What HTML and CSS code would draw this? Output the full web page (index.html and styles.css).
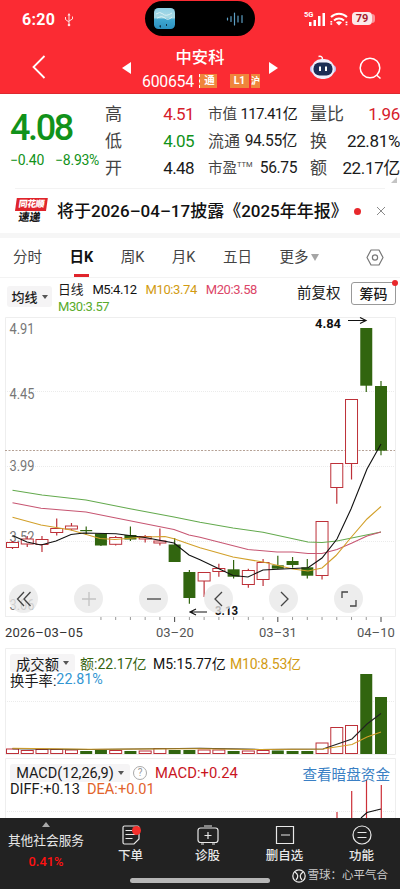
FILE: index.html
```html
<!DOCTYPE html>
<html lang="zh-CN">

<head>
    <meta charset="UTF-8" />
    <meta name="viewport" content="width=device-width, initial-scale=1.0" />
    <title>中安科 600654</title>
    <link rel="stylesheet" href="styles.css">
</head>

<body>
    <div class="app">
        <!-- Header -->
        <header class="header">
            <div class="status">
                <span class="clock">6:20</span>
                <svg class="usb" width="10" height="14" viewBox="0 0 10 14" fill="none" stroke="#ffe0e0" stroke-width="1">
                    <path d="M5 1v10M1.5 4v2.5L5 9M8.5 3.5v2.500L5 8" />
                    <path d="M5 0l1.500 2.500h-3z" fill="#ffe0e0" stroke="none" />
                    <circle cx="5" cy="12" r="1.300" fill="#ffe0e0" stroke="none" />
                </svg>
                <div class="island">
                    <svg width="21" height="21" viewBox="0 0 21 21">
                        <defs>
                            <linearGradient id="sky" x1="0" y1="0" x2="0" y2="1">
                                <stop offset="0" stop-color="#8fd0e6" />
                                <stop offset=".45" stop-color="#a9d9e4" />
                                <stop offset=".55" stop-color="#3fa6cf" />
                                <stop offset="1" stop-color="#2b91c0" />
                            </linearGradient>
                        </defs>
                        <rect width="21" height="21" rx="4.500" fill="url(#sky)" />
                        <path d="M2 6q4-3 7 0t9-1M3 10q5-3 8 0t7-1" stroke="#d8f0f4" fill="none" />
                        <path d="M5 18l2-1v3zM12 16h1v2h-1z" fill="#134" />
                    </svg>
                    <svg width="18" height="14" viewBox="0 0 18 14" stroke="#5d9fc4" stroke-width="1.200" stroke-linecap="round">
                        <path d="M1.500 6v2M5 4.500v5M8.500 1v12M12 4v6M16 3.500v7" />
                    </svg>
                </div>
                <div class="signals">
                    <span class="net">5G</span>
                    <svg class="bars" width="17" height="14" viewBox="0 0 17 14" fill="#fff">
                        <path d="M0 10h2.500v4H0zM4.500 8H7v6H4.500zM9 4h2.500v10H9zM13.500 1H16v13h-2.500z" />
                    </svg>
                    <svg width="18" height="14" viewBox="0 0 18 14" fill="none" stroke="#fff" stroke-width="2">
                        <path d="M1 5a11.500 11.500 0 0 1 16 0M4 8.500a7.500 7.500 0 0 1 10 0" />
                        <path d="M9 13.500l-3-3a4.500 4.500 0 0 1 6 0z" fill="#fff" stroke="none" />
                        <path d="M1.300 9v4M16.500 9.500v4" stroke-width="1.800" stroke-dasharray="1.500 .8" />
                    </svg>
                    <span class="battery">79</span>
                    <i class="battery-cap"></i>
                </div>
            </div>
            <div class="nav">
                <svg class="back" width="14" height="24" viewBox="0 0 14 24" fill="none" stroke="#fff" stroke-width="1.800">
                    <path d="M12.500 1L1.500 12l11 11" />
                </svg>
                <svg class="prev" width="10" height="12" viewBox="0 0 10 12" fill="#fff"><path d="M0 6l9-6v12z" /></svg>
                <div class="stock">
                    <div class="stock-name">中安科</div>
                    <div class="stock-code">
                        <span>600654</span>
                        <i class="tag tag-pass">通</i>
                        <i class="tag tag-l1">L1</i>
                        <i class="tag tag-end">沪</i>
                    </div>
                </div>
                <svg class="next" width="10" height="12" viewBox="0 0 10 12" fill="#fff"><path d="M9 6L0 0v12z" /></svg>
                <svg class="robot" width="26" height="25" viewBox="0 0 26 25">
                    <path d="M8.500 1.500q4-1 4 3" fill="none" stroke="#fff" stroke-width="1.500" />
                    <rect x="0" y="10" width="26" height="8" rx="4" fill="#c5c0f0" />
                    <rect x="1.500" y="4" width="23" height="20" rx="10" fill="#eeeefb" />
                    <rect x="3.500" y="7.500" width="19" height="13" rx="6" fill="#1c2d55" />
                    <path d="M10 11.500v4.500M16 11.500v4.500" stroke="#fff" stroke-width="2" />
                </svg>
                <svg class="search" width="23" height="23" viewBox="0 0 23 23" fill="none" stroke="#fff" stroke-width="1.500">
                    <circle cx="11" cy="11" r="9.800" />
                    <path d="M17.500 18l4 3.500" />
                </svg>
            </div>
        </header>

        <!-- Quote -->
        <section class="quote">
            <div class="last">
                <div class="price">4.08</div>
                <div class="change"><span>−0.40</span><span>−8.93%</span></div>
            </div>
            <dl class="col col-range">
                <div><dt>高</dt><dd class="up">4.51</dd></div>
                <div><dt>低</dt><dd class="down">4.05</dd></div>
                <div><dt>开</dt><dd>4.48</dd></div>
            </dl>
            <dl class="col col-cap">
                <div><dt>市值</dt><dd class="tight">117.41亿</dd></div>
                <div><dt class="wide">流通</dt><dd>94.55亿</dd></div>
                <div><dt>市盈<sup>TTM</sup></dt><dd>56.75</dd></div>
            </dl>
            <dl class="col col-vol">
                <div><dt>量比</dt><dd class="up">1.96</dd></div>
                <div><dt>换</dt><dd>22.81%</dd></div>
                <div><dt>额</dt><dd>22.17亿</dd></div>
            </dl>
            <i class="corner"></i>
        </section>

        <!-- Notice -->
        <section class="notice">
            <div class="logo"><span>同花顺</span><em>速递</em></div>
            <p>将于2026–04–17披露《2025年年报》</p>
            <i class="dot"></i>
            <svg width="10" height="10" viewBox="0 0 10 10" stroke="#8a8a8a"><path d="M1 1l8 8M9 1L1 9" /></svg>
        </section>

        <!-- Period tabs -->
        <nav class="tabs">
            <span>分时</span>
            <span class="active">日K</span>
            <span>周K</span>
            <span>月K</span>
            <span>五日</span>
            <span class="more">更多<i></i></span>
            <svg width="18" height="17" viewBox="0 0 18 17" fill="none" stroke="#777" stroke-width="1.200">
                <path d="M5 1h8l4 7.500-4 7.500H5L1 8.500z" stroke-linejoin="round" />
                <circle cx="9" cy="8.500" r="2.600" />
            </svg>
        </nav>

        <!-- Moving averages -->
        <section class="legend">
            <span class="picker">均线<i></i></span>
            <div class="averages">
                <span class="day">日线</span>
                <span class="m5">M5:4.12</span>
                <span class="m10">M10:3.74</span>
                <span class="m20">M20:3.58</span>
                <span class="m30">M30:3.57</span>
            </div>
            <span class="adjust">前复权</span>
            <span class="chips">筹码<i></i></span>
        </section>

        <!-- Candles -->
        <section class="kline">
            <svg id="kline" width="400" height="306" viewBox="0 316 400 306"></svg>
            <div class="controls">
                <button><svg width="18" height="18" viewBox="0 0 18 18"><path d="M9 2L2.500 9 9 16M15.500 2L9 9l6.500 7" /></svg></button>
                <button class="off"><svg width="18" height="18" viewBox="0 0 18 18"><path d="M9 2v14M2 9h14" /></svg></button>
                <button><svg width="18" height="18" viewBox="0 0 18 18"><path d="M2 9h14" /></svg></button>
                <button><svg width="18" height="18" viewBox="0 0 18 18"><path d="M12 2L5 9l7 7" /></svg></button>
                <button><svg width="18" height="18" viewBox="0 0 18 18"><path d="M6 2l7 7-7 7" /></svg></button>
                <button><svg width="18" height="18" viewBox="0 0 18 18"><path d="M2 8V2h6M16 10v6h-6" /></svg></button>
            </div>
        </section>
        <div class="dates">
            <span>2026–03–05</span><span>03–20</span><span>03–31</span><span>04–10</span>
        </div>

        <!-- Turnover -->
        <section class="panel volume">
            <svg id="volume" width="400" height="110" viewBox="0 648 400 110"></svg>
            <div class="panel-text">
                <div><span class="picker">成交额<i></i></span><span class="amount">额:22.17亿</span><span class="v5">M5:15.77亿</span><span class="v10">M10:8.53亿</span></div>
                <div class="rate">换手率:<b>22.81%</b></div>
            </div>
        </section>

        <!-- MACD -->
        <section class="panel macd">
            <svg id="macd" width="400" height="60" viewBox="0 758 400 60"></svg>
            <div class="panel-text">
                <div><span class="picker">MACD(12,26,9)<i></i></span><span class="help">?</span><span class="macd-value">MACD:+0.24</span><a>查看暗盘资金</a></div>
                <div class="diff">DIFF:+0.13 <b>DEA:+0.01</b></div>
            </div>
        </section>

        <!-- Bottom bar -->
        <footer class="bottom">
            <div class="sector"><i></i><span>其他社会服务</span><b>0.41%</b></div>
            <div class="action">
                <svg width="20" height="20" viewBox="0 0 20 20"><path d="M3.500 1h13q1.500 0 1.500 1.500V14l-5 5H3.500Q2 19 2 17.500v-15Q2 1 3.500 1zM4.500 5.500h7M4.500 9.500h10M4.500 13.500h7" /><circle class="badge" cx="15.500" cy="5.500" r="4.500" /></svg>
                <span>下单</span>
            </div>
            <div class="action">
                <svg width="22" height="20" viewBox="0 0 22 20"><rect x="1" y="3" width="20" height="14.500" rx="2.500" /><path d="M7 1h8M4 19h3M15 19h3M11 7v7M7.500 10.500h7" /></svg>
                <span>诊股</span>
            </div>
            <div class="action">
                <svg width="20" height="20" viewBox="0 0 20 20"><path d="M1.500 1.500h17v17h-17zM6 10h9" /></svg>
                <span>删自选</span>
            </div>
            <div class="action">
                <svg width="20" height="20" viewBox="0 0 20 20"><circle cx="10" cy="10" r="9" /><path d="M5.500 7.500h9M5.500 12.500h9" /></svg>
                <span>功能</span>
            </div>
            <i class="home"></i>
            <div class="credit">
                <svg width="14" height="14" viewBox="0 0 14 14" fill="none" stroke="#eee" stroke-width="1.200"><circle cx="7" cy="7" r="6.200" /><path d="M3 3q5 3.500 1 8M11 3Q6 6.500 10 11" /></svg>
                <span>雪球：心平气合</span>
            </div>
        </footer>
    </div>

    <script src="script.js"></script>
</body>

</html>
```
FILE: styles.css
```css
body {
    margin: 0;
    background: #fff;
    color: #1a1a1a;
    font-family: Roboto, "Noto Sans CJK SC", sans-serif;
}

i, em {
    font-style: normal;
}

svg {
    display: block;
    flex: none;
}

.app {
    width: 400px;
    height: 889px;
    overflow: hidden;
    display: flex;
    flex-direction: column;
}

.app > * {
    flex: none;
    box-sizing: border-box;
}

/* Header */
.header {
    height: 94px;
    background: #fb2b33;
    color: #fff;
    border-bottom: 1px solid #dd2930;
}

.status {
    height: 40px;
    display: flex;
    align-items: flex-start;
}

.clock {
    width: 34px;
    margin: 11px 0 0 22px;
    font-size: 16px;
    line-height: 18px;
    font-weight: 700;
    letter-spacing: .3px;
}

.usb {
    margin: 13px 0 0 8px;
}

.island {
    box-sizing: border-box;
    width: 110px;
    height: 35px;
    margin: 1px 0 0 71px;
    padding: 0 11px 0 9px;
    border-radius: 18px;
    background: #000;
    display: flex;
    align-items: center;
    justify-content: space-between;
}

.signals {
    display: flex;
    margin: 12px 0 0 49px;
}

.net {
    width: 5px;
    font-size: 7.5px;
    line-height: 6px;
    font-weight: 700;
    white-space: nowrap;
}

.bars {
    margin-right: 4px;
}

.battery {
    width: 20px;
    height: 13px;
    margin-left: 4px;
    border-radius: 4px;
    background: #fbe9e9;
    color: #a81c2c;
    font-size: 11px;
    line-height: 13px;
    font-weight: 700;
    text-align: center;
}

.battery-cap {
    width: 3px;
    height: 9px;
    margin-top: 2px;
    border-radius: 0 4px 4px 0;
    background: #fb9297;
}

.nav {
    display: flex;
    align-items: flex-start;
}

.back { margin: 15px 0 0 32px; }
.prev { margin: 22px 0 0 76px; }

.stock {
    width: 118px;
    margin-left: 10px;
    margin-right: 9px;
}

.stock-name {
    margin-top: 6px;
    font-size: 16.3px;
    line-height: 24px;
    font-weight: 500;
    text-align: center;
    text-indent: -2px;
}

.stock-code {
    display: flex;
    align-items: center;
    height: 18px;
    margin-top: 2px;
    font-size: 15.8px;
    letter-spacing: -.25px;
}

.stock-code span {
    width: 57px;
}

.tag {
    height: 14px;
    background: #ef853b;
    font-size: 10.5px;
    line-height: 13px;
    letter-spacing: 0;
    font-weight: 700;
    text-align: center;
}

.tag-pass {
    box-sizing: border-box;
    width: 18px;
    padding-left: 2px;
    margin-right: 13px;
    border-left: 1px dashed #fff;
}

.tag-l1 { width: 19px; margin-right: 2px; }
.tag-end { width: 9px; font-size: 9px; line-height: 14px; }

.next { margin: 22px 0 0 0; }
.robot { margin: 15px 0 0 31px; }
.search { margin: 17px 0 0 23px; }

/* Quote */
.quote {
    height: 95px;
    display: flex;
    position: relative;
    padding-top: 7px;
    background: linear-gradient(#f3f3f3, #f3f3f3) 15px 94px / 370px 1px no-repeat;
}

.last {
    width: 95px;
    padding-left: 10px;
    color: #11921a;
    white-space: nowrap;
}

.price {
    font-size: 36px;
    line-height: 42px;
    margin-top: 6px;
    font-weight: 500;
    letter-spacing: -2.4px;
}

.change {
    font-size: 14px;
    line-height: 18px;
    margin-top: 2px;
    letter-spacing: -.25px;
}

.change span {
    margin-right: 11px;
}

.change span + span {
    margin-right: 0;
}

.col {
    margin: 0;
}

.col div {
    height: 27px;
    display: flex;
    align-items: center;
    justify-content: space-between;
    white-space: nowrap;
}

.col dt {
    color: #444;
    font-size: 17px;
    line-height: 27px;
}

.col dd {
    margin: 0;
    font-size: 17px;
    line-height: 27px;
    letter-spacing: -.6px;
}

.col-range { width: 89px; }
.col-cap { width: 89px; margin-left: 14px; }
.col-vol { width: 90px; margin-left: 13px; }

.col-cap dt { font-size: 14.5px; }
.col-cap dt.wide { font-size: 16px; }
.col-cap dd { font-size: 15.6px; letter-spacing: -.4px; }
.col-cap dd.tight { font-size: 15px; letter-spacing: -.65px; }
.col-vol dd { letter-spacing: -.35px; }

.col sup {
    font-size: 7.5px;
    line-height: 0;
    vertical-align: 6px;
}

.up { color: #d6202b; }
.down { color: #11921a; }

.corner {
    position: absolute;
    right: 3px;
    bottom: 6px;
    border: 3px solid transparent;
    border-right-color: #c4c4c4;
    border-bottom-color: #c4c4c4;
}

/* Notice */
.notice {
    height: 49px;
    border-bottom: 5px solid #f6f6f6;
    display: flex;
    align-items: center;
    padding-left: 15px;
}

.logo {
    width: 31px;
    transform: skewX(-8deg);
    font-weight: 900;
    text-align: center;
}

.logo span,
.logo em {
    display: block;
}

.logo span {
    background: #e0242b;
    color: #fff;
    font-size: 9px;
    line-height: 13px;
    letter-spacing: -.5px;
}

.logo em {
    font-size: 11px;
    line-height: 13px;
}

.notice p {
    width: 287px;
    margin: 0 0 0 11px;
    font-size: 17px;
    line-height: 24px;
    font-weight: 500;
    white-space: nowrap;
    color: #111;
}

.notice .dot {
    width: 7px;
    height: 7px;
    margin: 0 15px 0 10px;
    border-radius: 50%;
    background: #e8282c;
}

/* Tabs */
.tabs {
    height: 40px;
    display: flex;
    align-items: center;
    padding-left: 13px;
    border-bottom: 1px solid #f3f3f3;
    font-size: 14.5px;
    color: #444;
}

.tabs span {
    margin-right: 27.5px;
    line-height: 39px;
    height: 39px;
    white-space: nowrap;
}

.tabs .active {
    color: #111;
    font-weight: 700;
    background: linear-gradient(#e0242b, #e0242b) 4px 36px / 15px 3px no-repeat;
}

.tabs .more {
    display: flex;
    align-items: center;
    margin-right: 47px;
}

.more i {
    margin-left: 3px;
    border: 4px solid transparent;
    border-top: 7px solid #a5a5a5;
    border-bottom: 0;
}

/* Legend */
.legend {
    height: 38px;
    display: flex;
    align-items: flex-start;
    padding-left: 7px;
}

.picker {
    display: inline-flex;
    align-items: center;
    justify-content: center;
    background: #f5f4f5;
    border-radius: 3px;
    white-space: nowrap;
}

.picker i {
    margin-left: 4px;
    border: 3px solid transparent;
    border-top: 4px solid #555;
    border-bottom: 0;
}

.legend .picker {
    width: 45px;
    height: 21px;
    margin-top: 8px;
    font-size: 13px;
    font-weight: 500;
}

.averages {
    width: 236px;
    margin-left: 6px;
    padding-top: 3px;
    font-size: 13px;
    line-height: 17px;
    letter-spacing: -.4px;
}

.averages span { margin-right: 6px; }
.averages .day { font-size: 12.8px; letter-spacing: 0; }
.m5 { color: #111; }
.m10 { color: #d29b12; }
.m20 { color: #dc4668; }
.m30 { color: #59ab2c; }

.adjust {
    width: 46px;
    margin-left: 3px;
    font-size: 14.5px;
    line-height: 32px;
    white-space: nowrap;
}

.chips {
    position: relative;
    width: 43px;
    height: 21px;
    margin: 4px 0 0 8px;
    border: 1px solid #999;
    border-radius: 3px;
    font-size: 14px;
    line-height: 22px;
    font-weight: 500;
    text-align: center;
}

.chips i {
    position: absolute;
    top: -3px;
    right: -3px;
    width: 6px;
    height: 6px;
    border-radius: 50%;
    background: #e8282c;
}

/* Charts */
.kline {
    height: 306px;
    display: grid;
}

.kline > * {
    grid-area: 1 / 1;
}

.controls {
    z-index: 1;
    align-self: end;
    display: flex;
    margin: 0 0 9px 9px;
    width: 354px;
    justify-content: space-between;
}

.controls button {
    width: 29px;
    height: 29px;
    padding: 0;
    border: none;
    border-radius: 50%;
    background: rgba(232, 232, 232, .78);
    display: flex;
    align-items: center;
    justify-content: center;
}

.controls path {
    fill: none;
    stroke: #444;
    stroke-width: 1.3;
}

.controls .off path {
    stroke: #c2c2c2;
}

.dates {
    height: 26px;
    padding-left: 5px;
    display: flex;
    font-size: 13px;
    line-height: 22px;
    letter-spacing: 0;
    color: #555;
}

.dates span { width: 151px; }
.dates span:first-child { color: #333; letter-spacing: .25px; }
.dates span + span { width: 103px; }
.dates span + span + span { width: 98px; }
.dates span:last-child { width: 40px; }

.panel {
    display: grid;
}

.panel > * {
    grid-area: 1 / 1;
}

.panel-text {
    z-index: 1;
    width: 385px;
    font-size: 14px;
    padding-left: 10px;
}

.panel-text > div {
    display: flex;
    align-items: center;
    white-space: nowrap;
    height: 16px;
}

.panel-text b { font-weight: 400; }

.volume { height: 110px; }
.volume .panel-text { padding-top: 7px; }
.volume .picker { width: 65px; height: 18px; margin-right: 5px; font-size: 14.3px; }
.amount { color: #376512; width: 73px; }
.v5 { color: #111; width: 77px; }
.v10 { color: #d29b12; letter-spacing: -.2px; }
.volume .rate { font-size: 14.3px; }
.volume .rate b { color: #3296d2; }

.macd { height: 60px; }
.macd .panel-text { padding-top: 7px; }
.macd .picker { width: 120px; height: 18px; font-size: 14.5px; }

.help {
    box-sizing: border-box;
    width: 14px;
    height: 14px;
    margin: 0 8px 0 3px;
    border: 1px solid #aaa;
    border-radius: 50%;
    color: #999;
    font-size: 10px;
    line-height: 12px;
    text-align: center;
}

.macd-value { color: #c9151e; font-size: 14.8px; }
.macd a { margin-left: auto; color: #3a7fc4; font-size: 14.6px; margin-right: 5px; }
.macd .diff { font-size: 14.6px; }
.diff b { color: #e2632c; margin-left: 7px; }

/* Bottom bar */
.bottom {
    position: relative;
    height: 71px;
    background: #222;
    color: #e8e8e8;
    display: flex;
}

.sector {
    width: 92px;
    display: flex;
    flex-direction: column;
    align-items: center;
    white-space: nowrap;
}

.sector i {
    margin-top: 4px;
    border: 4px solid transparent;
    border-bottom: 5px solid #aaa;
    border-top: 0;
}

.sector span { font-size: 12.7px; line-height: 18px; margin-top: 5px; }
.sector b { color: #f11; font-size: 12.8px; line-height: 16px; margin-top: 4px; font-weight: 500; }

.action {
    width: 77px;
    padding-top: 7px;
    display: flex;
    flex-direction: column;
    align-items: center;
    font-size: 12.5px;
    line-height: 21px;
    font-weight: 500;
}

.action svg {
    fill: none;
    stroke: #e8e8e8;
    stroke-width: 1.2;
}

.action .badge {
    fill: #f5302c;
    stroke: none;
}

.home {
    position: absolute;
    left: 130px;
    bottom: 6px;
    width: 140px;
    height: 5px;
    border-radius: 3px;
    background: #b6b6b6;
}

.credit {
    position: absolute;
    right: 12px;
    bottom: 5px;
    display: flex;
    align-items: center;
    gap: 2px;
    color: #ccc;
    font-size: 11.5px;
    line-height: 17px;
    white-space: nowrap;
}
```
FILE: script.js
```javascript
const RED = '#bd3038';
const GREEN = '#31650f';

// x du centre de chaque bougie
const cx = i => 12.5 + i * 14.74;

// [type, haut du corps, bas du corps, haut de mèche, bas de mèche]
const candles = [
    ['r', 542.5, 547.5, 541, 549], ['r', 539, 544, 536, 547], ['r', 539.5, 544.5, 536, 552],
    ['r', 528.5, 532.5, 518.5, 535.5], ['r', 526, 529, 523, 530.5], ['g', 530, 531.2, 526.5, 535],
    ['g', 533.5, 545.5, 533, 546], ['r', 537.5, 544.3, 536, 545.5], ['g', 535, 539.5, 526.5, 541],
    ['r', 536.5, 539, 535, 542.5], ['r', 541, 543, 528.5, 545.5], ['g', 544.5, 562, 538, 562],
    ['g', 572, 598, 570, 603.7], ['r', 572.5, 581, 572.5, 597], ['r', 568.5, 571.5, 563.7, 576.7],
    ['g', 569.3, 576.7, 560, 578.5], ['r', 570.5, 584.5, 568.7, 587.7], ['r', 562.5, 579.5, 559, 586],
    ['g', 565.3, 568.7, 555.7, 569], ['g', 561, 565, 557, 567.7], ['g', 567.3, 575.7, 559, 578.5],
    ['r', 521.5, 575.5, 521.5, 579.5], ['r', 463.5, 487.5, 463.5, 503.7], ['r', 399.5, 463.5, 399.5, 479.5],
    ['g', 328, 385.7, 328, 392], ['g', 386, 450.7, 381, 455.3]
];

const volumeTops = [749, 750.5, 749.5, 749.5, 750, 751, 750, 750.5, 751, 751, 748.5, 750, 750,
    750, 750, 751, 751, 750.5, 750.5, 751, 751, 743, 727.5, 725.5, 674, 697];

function line(points, color, width = 1.1) {
    return `<polyline points="${points}" fill="none" stroke="${color}" stroke-width="${width}"/>`;
}

function rule(y, color = '#ebebeb', dash = '1 1') {
    return `<path d="M5 ${y}H395" stroke="${color}" stroke-dasharray="${dash}"/>`;
}

function box(i, top, bottom, type) {
    const x = cx(i);
    if (type === 'g') {
        return `<rect x="${x - 6}" y="${top}" width="12" height="${bottom - top}" fill="${GREEN}"/>`;
    }
    return `<rect x="${x - 6}" y="${top}" width="12" height="${bottom - top}" fill="#fff" stroke="${RED}"/>`;
}

function drawKline() {
    let out = '<path d="M5.5 617V317.500H395.500V616.500H5" fill="none" stroke="#eee"/>';
    out += rule(391.5) + rule(466.5) + rule(541.5) + rule(450.5, '#b5a195', '2 1.5');

    const labels = [['4.91', 333.5], ['4.45', 398.5], ['3.99', 470.5], ['3.52', 541.5], ['3.06', 609.5]];
    labels.forEach(([t, y]) => {
        out += `<text x="9.5" y="${y}" font-size="14.5" fill="#777" textLength="25" lengthAdjust="spacingAndGlyphs">${t}</text>`;
    });

    candles.forEach(([type, top, bottom, high, low], i) => {
        out += `<path d="M${cx(i)} ${high}V${low}" stroke="${type === 'g' ? GREEN : RED}" stroke-width="1.2"/>`;
        out += box(i, top, bottom, type);
        if (i > 5) {
            const major = i === 11 || i === 18 || i === 25;
            out += `<path d="M${cx(i)} 617v${major ? 5 : 3}" stroke="${major ? '#444' : '#999'}"/>`;
        }
    });

    out += line('12.5,490.3 42,495 86,500 130,508.7 174,517 200,522.3 233,528 263,532.3 308,542 322,542.5 337,541 381,532', '#64aa4e');
    out += line('12.5,502.7 41,508.3 86,512 116,518 174,529.5 189,535 200,537.3 248,549.5 277,552 293,552 308,553.5 322,553.5 337,549.5 352,543 367,536 381,532', '#c75672');
    out += line('12.5,517.3 41,525 71,530 100,538.5 115,539.5 145,537 165,536.5 174,538.7 189,544 200,547.7 233,557 263,562 293,569 308,571 322,568 336,555.5 351,537.5 367,519 381,506.5', '#d2a02a');
    out += line('12.5,535.5 27,542 41,545 56,541 71,534.5 84,533 116,533.7 145,537.5 174,543 189,555 200,559.7 233,575.5 248,577 263,570 308,567.7 322,558 337,539 351,509 367,469 381,444', '#111');

    // plus haut / plus bas
    out += '<g font-size="12" font-weight="700" fill="#111"><text x="315" y="328" textLength="26" lengthAdjust="spacingAndGlyphs">4.84</text><text x="215" y="615" textLength="23" lengthAdjust="spacingAndGlyphs">3.13</text></g>';
    out += '<path d="M348 320.500h18m-6-3l6 3-6 3M207 612h-17m6-3l-6 3 6 3" fill="none" stroke="#111" stroke-width="1.200"/>';
    document.getElementById('kline').innerHTML = out;
}

function drawVolume() {
    let out = '<path d="M5.500 648.500H395.500V754.500H5.500z" fill="none" stroke="#eee"/>' + rule(701.5);
    volumeTops.forEach((top, i) => {
        out += box(i, top, candles[i][0] === 'g' ? 754 : 753.5, candles[i][0]);
    });
    out += line('12.5,748.7 90,749.5 200,748.3 260,749.5 323,749 352,739 367,724 381,713.5', '#222');
    out += line('12.5,748.2 90,749.3 200,748.8 260,749.5 323,749 352,744.5 367,737 381,732', '#d2a02a');
    document.getElementById('volume').innerHTML = out;
}

function drawMacd() {
    let out = '<path d="M5.500 818V758.500H395.500V818" fill="none" stroke="#eee"/>' + rule(811.5);
    out += '<path d="M337 812v6M351.700 791v27M366.500 780v38M381.300 785v33" stroke="#cc3038" stroke-width="1.200"/>';
    out += line('361,818 367,812.5 381,809', '#111');
    document.getElementById('macd').innerHTML = out;
}

drawKline();
drawVolume();
drawMacd();
```
